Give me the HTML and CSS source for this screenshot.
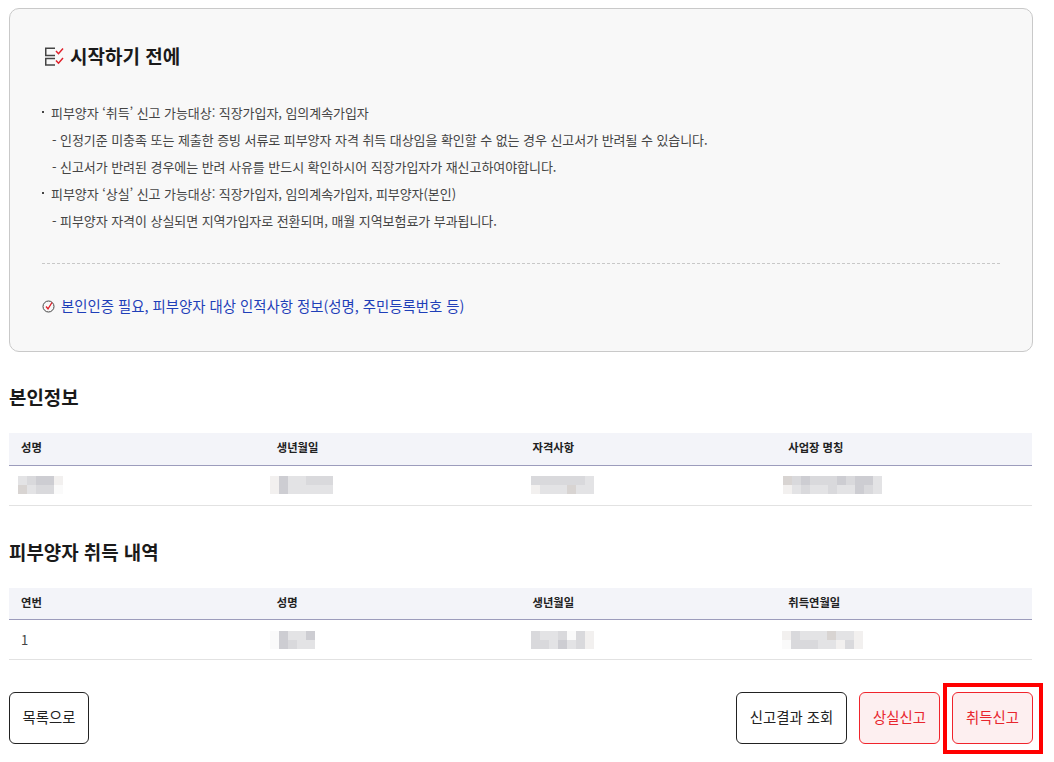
FILE: index.html
```html
<!DOCTYPE html>
<html lang="ko">
<head>
<meta charset="utf-8">
<title>피부양자 신고</title>
<link rel="stylesheet" href="styles.css">
</head>
<body>
<main class="page">
  <section class="notice">
    <h2 class="notice-title">
      <svg class="title-icon" width="22" height="22" viewBox="0 0 22 22" fill="none" aria-hidden="true">
        <path d="M12 4.250H2.750V11.500H12M12 14.500H2.750V21H12" stroke="#444" stroke-width="1.500"/>
        <path d="M13 7l2.500 2.700L20 4.500M13 16.500l2.500 2.700L20 14" stroke="#e0202a" stroke-width="1.500"/>
      </svg>
      시작하기 전에
    </h2>
    <ul class="notes">
      <li class="dot">피부양자 ‘취득’ 신고 가능대상: 직장가입자, 임의계속가입자</li>
      <li class="sub">- 인정기준 미충족 또는 제출한 증빙 서류로 피부양자 자격 취득 대상임을 확인할 수 없는 경우 신고서가 반려될 수 있습니다.</li>
      <li class="sub">- 신고서가 반려된 경우에는 반려 사유를 반드시 확인하시어 직장가입자가 재신고하여야합니다.</li>
      <li class="dot">피부양자 ‘상실’ 신고 가능대상: 직장가입자, 임의계속가입자, 피부양자(본인)</li>
      <li class="sub">- 피부양자 자격이 상실되면 지역가입자로 전환되며, 매월 지역보험료가 부과됩니다.</li>
    </ul>
    <p class="need">
      <svg width="14" height="14" viewBox="0 0 14 14" fill="none" aria-hidden="true">
        <circle cx="6.500" cy="7.500" r="5.500" stroke="#444" stroke-width="1"/>
        <path d="M4 7.500l2 2.300L10 3.500" stroke="#e0202a" stroke-width="1.300"/>
      </svg>
      본인인증 필요, 피부양자 대상 인적사항 정보(성명, 주민등록번호 등)
    </p>
  </section>

  <h3 class="sec sec-first">본인정보</h3>
  <table class="grid">
    <thead><tr><th>성명</th><th>생년월일</th><th>자격사항</th><th>사업장 명칭</th></tr></thead>
    <tbody><tr>
      <td class="masked left-a"><span class="mosaic c5"><i class="s3"></i><i class="s2"></i><i class="s1"></i><i class="s1"></i><i class="s5"></i><i class="s4"></i><i class="s3"></i><i class="s2"></i><i class="s2"></i><i class="s6"></i></span></td>
      <td class="masked left-b"><span class="mosaic c7"><i class="s5"></i><i class="s1"></i><i class="s3"></i><i class="s3"></i><i class="s2"></i><i class="s2"></i><i class="s2"></i><i class="s5"></i><i class="s1"></i><i class="s3"></i><i class="s3"></i><i class="s3"></i><i class="s3"></i><i class="s3"></i></span></td>
      <td class="masked left-c"><span class="mosaic c7"><i class="s2"></i><i class="s2"></i><i class="s2"></i><i class="s2"></i><i class="s2"></i><i class="s2"></i><i class="s3"></i><i class="s5"></i><i class="s3"></i><i class="s3"></i><i class="s3"></i><i class="s4"></i><i class="s3"></i><i class="s3"></i></span></td>
      <td class="masked left-d"><span class="mosaic c11"><i class="s4"></i><i class="s2"></i><i class="s1"></i><i class="s2"></i><i class="s2"></i><i class="s2"></i><i class="s1"></i><i class="s2"></i><i class="s1"></i><i class="s1"></i><i class="s3"></i><i class="s5"></i><i class="s3"></i><i class="s2"></i><i class="s3"></i><i class="s3"></i><i class="s2"></i><i class="s3"></i><i class="s3"></i><i class="s1"></i><i class="s2"></i><i class="s3"></i></span></td>
    </tr></tbody>
  </table>

  <h3 class="sec sec-second">피부양자 취득 내역</h3>
  <table class="grid">
    <thead><tr><th>연번</th><th>성명</th><th>생년월일</th><th>취득연월일</th></tr></thead>
    <tbody><tr>
      <td>1</td>
      <td class="masked left-b"><span class="mosaic c5"><i class="s6"></i><i class="s1"></i><i class="s3"></i><i class="s3"></i><i class="s1"></i><i class="s6"></i><i class="s1"></i><i class="s2"></i><i class="s3"></i><i class="s3"></i></span></td>
      <td class="masked left-c"><span class="mosaic c7"><i class="s2"></i><i class="s3"></i><i class="s3"></i><i class="s2"></i><i class="s6"></i><i class="s2"></i><i class="s5"></i><i class="s2"></i><i class="s2"></i><i class="s3"></i><i class="s1"></i><i class="s3"></i><i class="s2"></i><i class="s5"></i></span></td>
      <td class="masked left-d2"><span class="mosaic c9"><i class="s5"></i><i class="s2"></i><i class="s3"></i><i class="s3"></i><i class="s3"></i><i class="s4"></i><i class="s3"></i><i class="s3"></i><i class="s5"></i><i class="s6"></i><i class="s2"></i><i class="s2"></i><i class="s2"></i><i class="s3"></i><i class="s3"></i><i class="s5"></i><i class="s2"></i><i class="s5"></i></span></td>
    </tr></tbody>
  </table>

  <div class="actions">
    <button class="btn">목록으로</button>
    <div class="actions-right">
      <button class="btn btn-wide">신고결과 조회</button>
      <button class="btn btn-red">상실신고</button>
      <div class="marked">
        <button class="btn btn-red">취득신고</button>
        <span class="highlight"></span>
      </div>
    </div>
  </div>
</main>
</body>
</html>
```
FILE: styles.css
```css
* { box-sizing: border-box; }
html, body { margin: 0; background: #fff; }
body {
  font-family: "Noto Sans CJK KR", "Noto Sans", sans-serif;
  color: #222;
}
.page { width: 1024px; margin-left: 9px; padding-top: 8px; padding-bottom: 18px; }

.notice {
  height: 344px;
  border: 1px solid #c9c9c9;
  border-radius: 10px;
  background: #f8f8f8;
  padding: 31px 32px 0;
}
.notice-title {
  display: flex;
  align-items: center;
  gap: 5px;
  margin: 0;
  height: 30px;
  font-size: 19px;
  font-weight: 700;
  color: #1a1a1a;
}
.title-icon { display: block; margin-left: 1px; }

.notes {
  list-style: none;
  margin: 29px 0 0;
  padding: 0 0 29px;
  border-bottom: 1px dashed #c8c8c8;
  font-size: 13px;
  line-height: 27px;
  letter-spacing: -0.06px;
  color: #444;
}
.notes .dot { position: relative; padding-left: 9px; }
.notes .dot::before {
  content: "";
  position: absolute;
  left: 0;
  top: 12px;
  width: 2px;
  height: 2px;
  background: #444;
}
.notes .sub { padding-left: 10px; }

.need {
  display: flex;
  align-items: center;
  gap: 5px;
  margin: 30px 0 0;
  line-height: 24px;
  font-size: 14.400px;
  color: #1f3fb8;
}

.sec {
  margin: 0;
  font-size: 18.900px;
  line-height: 26px;
  font-weight: 700;
  color: #1a1a1a;
}
.sec-first { margin-top: 32px; }
.sec-second { margin-top: 33px; }

.grid {
  width: 1023px;
  margin-top: 23px;
  border-collapse: collapse;
  table-layout: fixed;
}
.grid th {
  height: 32px;
  padding: 0 12px 3px;
  text-align: left;
  font-size: 11.300px;
  font-weight: 700;
  color: #222;
  background: #f3f4f9;
  border-bottom: 1px solid #9c9cbc;
}
.grid td {
  height: 40px;
  padding: 0 12px;
  font-size: 13px;
  color: #444;
  border-bottom: 1px solid #e2e2e2;
  vertical-align: middle;
}
.grid .masked { line-height: 0; }
.grid .left-a { padding-left: 9px; }
.grid .left-b { padding-left: 5px; }
.grid .left-c { padding-left: 10px; }
.grid .left-d { padding-left: 7px; }
.grid .left-d2 { padding-left: 6px; }

.mosaic { display: inline-grid; grid-auto-rows: 9px; vertical-align: middle; }
.mosaic i { display: block; }
.c5 { grid-template-columns: repeat(5, 9px); }
.c7 { grid-template-columns: repeat(7, 9px); }
.c9 { grid-template-columns: repeat(9, 9px); }
.c11 { grid-template-columns: repeat(11, 9px); }
.s1 { background: #cdcdd2; }
.s2 { background: #d9d9dc; }
.s3 { background: #e3e3e5; }
.s4 { background: #d8d4d2; }
.s5 { background: #f2f0ef; }
.s6 { background: #fafafa; }

.actions {
  display: flex;
  justify-content: space-between;
  margin-top: 32px;
}
.actions-right { display: flex; gap: 12px; }
.btn {
  width: 80px;
  height: 52px;
  padding: 0 0 3px;
  border: 1px solid #222;
  border-radius: 6px;
  background: #fff;
  font-family: inherit;
  font-size: 14.400px;
  color: #222;
}
.btn-wide { width: 111px; }
.btn-red {
  width: 81px;
  border-color: #f0242c;
  background: #fdeff0;
  color: #e8262e;
}
.marked { position: relative; }
.highlight {
  position: absolute;
  left: -9px;
  right: -10px;
  top: -9px;
  bottom: -10px;
  border: 4px solid #f00;
  pointer-events: none;
}
```
